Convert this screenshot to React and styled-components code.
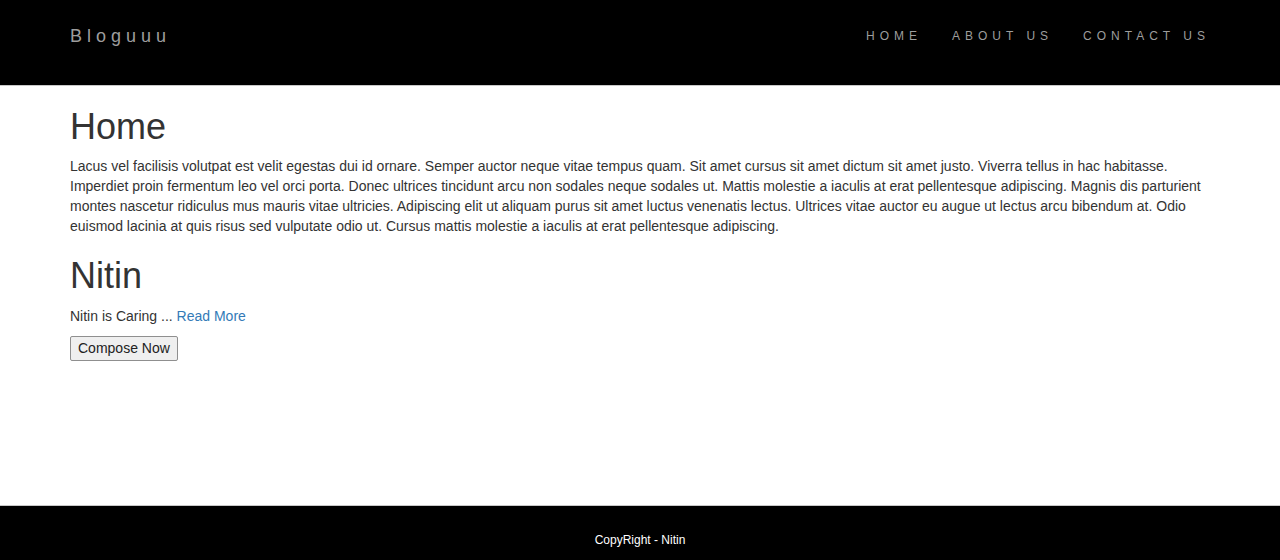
import styled, { createGlobalStyle } from 'styled-components';

const GlobalStyle = createGlobalStyle`
    * { box-sizing: border-box; }
    html, body { margin: 0; padding: 0; }
    body {
        font-family: "Liberation Sans", Arial, sans-serif;
        font-size: 14px;
        line-height: 20px;
        color: #333;
        background: #fff;
    }
`

const Page = styled.div`
    display: flex;
    flex-direction: column;
    min-height: 560px;
`

const Navbar = styled.nav`
    background: #000;
    height: 86px;
    border-bottom: 1px solid #c8c8c8;
`

const NavInner = styled.div`
    width: 1140px;
    margin: 0 auto;
    padding-top: 25px;
    display: flex;
    align-items: center;
    justify-content: space-between;
`

const Brand = styled.a`
    color: #9d9d9d;
    font-size: 18px;
    line-height: 22px;
    letter-spacing: 5px;
    text-decoration: none;
`

const NavLinks = styled.ul`
    display: flex;
    list-style: none;
    margin: 0 -15px 0 0;
    padding: 0;
`

const NavLink = styled.a`
    display: block;
    padding: 0 15px;
    color: #9d9d9d;
    font-size: 12px;
    line-height: 20px;
    letter-spacing: 5px;
    text-decoration: none;
`

const Main = styled.main`
    flex: 1;
    width: 1140px;
    margin: 0 auto;
    padding-top: 21px;
`

const Heading = styled.h1`
    font-size: 36px;
    font-weight: 500;
    line-height: 1.1;
    margin: ${props => (props.first ? '0 0 9px' : '20px 0 11px')};
`

const Paragraph = styled.p`
    margin: 0 0 10px;
`

const Link = styled.a`
    color: #337ab7;
    text-decoration: none;
`

const Button = styled.button`
    font-family: inherit;
    font-size: 14px;
    line-height: 20px;
    color: #222;
    background: #efefef;
    border: 1px solid #8f8f8f;
    border-radius: 2px;
    padding: 1px 7px 2px;
`

const Footer = styled.footer`
    background: #000;
    border-top: 1px solid #c8c8c8;
    height: 55px;
    padding-top: 27px;
    text-align: center;
    color: #fff;
    font-size: 12px;
    line-height: 14px;
`

const paragraph = 'Lacus vel facilisis volutpat est velit egestas dui id ornare. Semper auctor neque vitae tempus quam. Sit amet cursus sit amet dictum sit amet justo. Viverra tellus in hac habitasse. Imperdiet proin fermentum leo vel orci porta. Donec ultrices tincidunt arcu non sodales neque sodales ut. Mattis molestie a iaculis at erat pellentesque adipiscing. Magnis dis parturient montes nascetur ridiculus mus mauris vitae ultricies. Adipiscing elit ut aliquam purus sit amet luctus venenatis lectus. Ultrices vitae auctor eu augue ut lectus arcu bibendum at. Odio euismod lacinia at quis risus sed vulputate odio ut. Cursus mattis molestie a iaculis at erat pellentesque adipiscing.'

const links = ['HOME', 'ABOUT US', 'CONTACT US']

const posts = [
    { title: 'Nitin', excerpt: 'Nitin is Caring' }
]

const App = () => {
    return (
        <Page>
            <GlobalStyle />
            <Navbar>
                <NavInner>
                    <Brand href="#">Bloguuu</Brand>
                    <NavLinks>
                        {links.map(item => (
                            <li key={item}><NavLink href="#">{item}</NavLink></li>
                        ))}
                    </NavLinks>
                </NavInner>
            </Navbar>
            <Main>
                <Heading first>Home</Heading>
                <Paragraph>{paragraph}</Paragraph>
                {posts.map(post => (
                    <div key={post.title}>
                        <Heading>{post.title}</Heading>
                        <Paragraph>{post.excerpt} ... <Link href="#">Read More</Link></Paragraph>
                    </div>
                ))}
                <Button>Compose Now</Button>
            </Main>
            <Footer>CopyRight - Nitin</Footer>
        </Page>
    );
}

export default App;
